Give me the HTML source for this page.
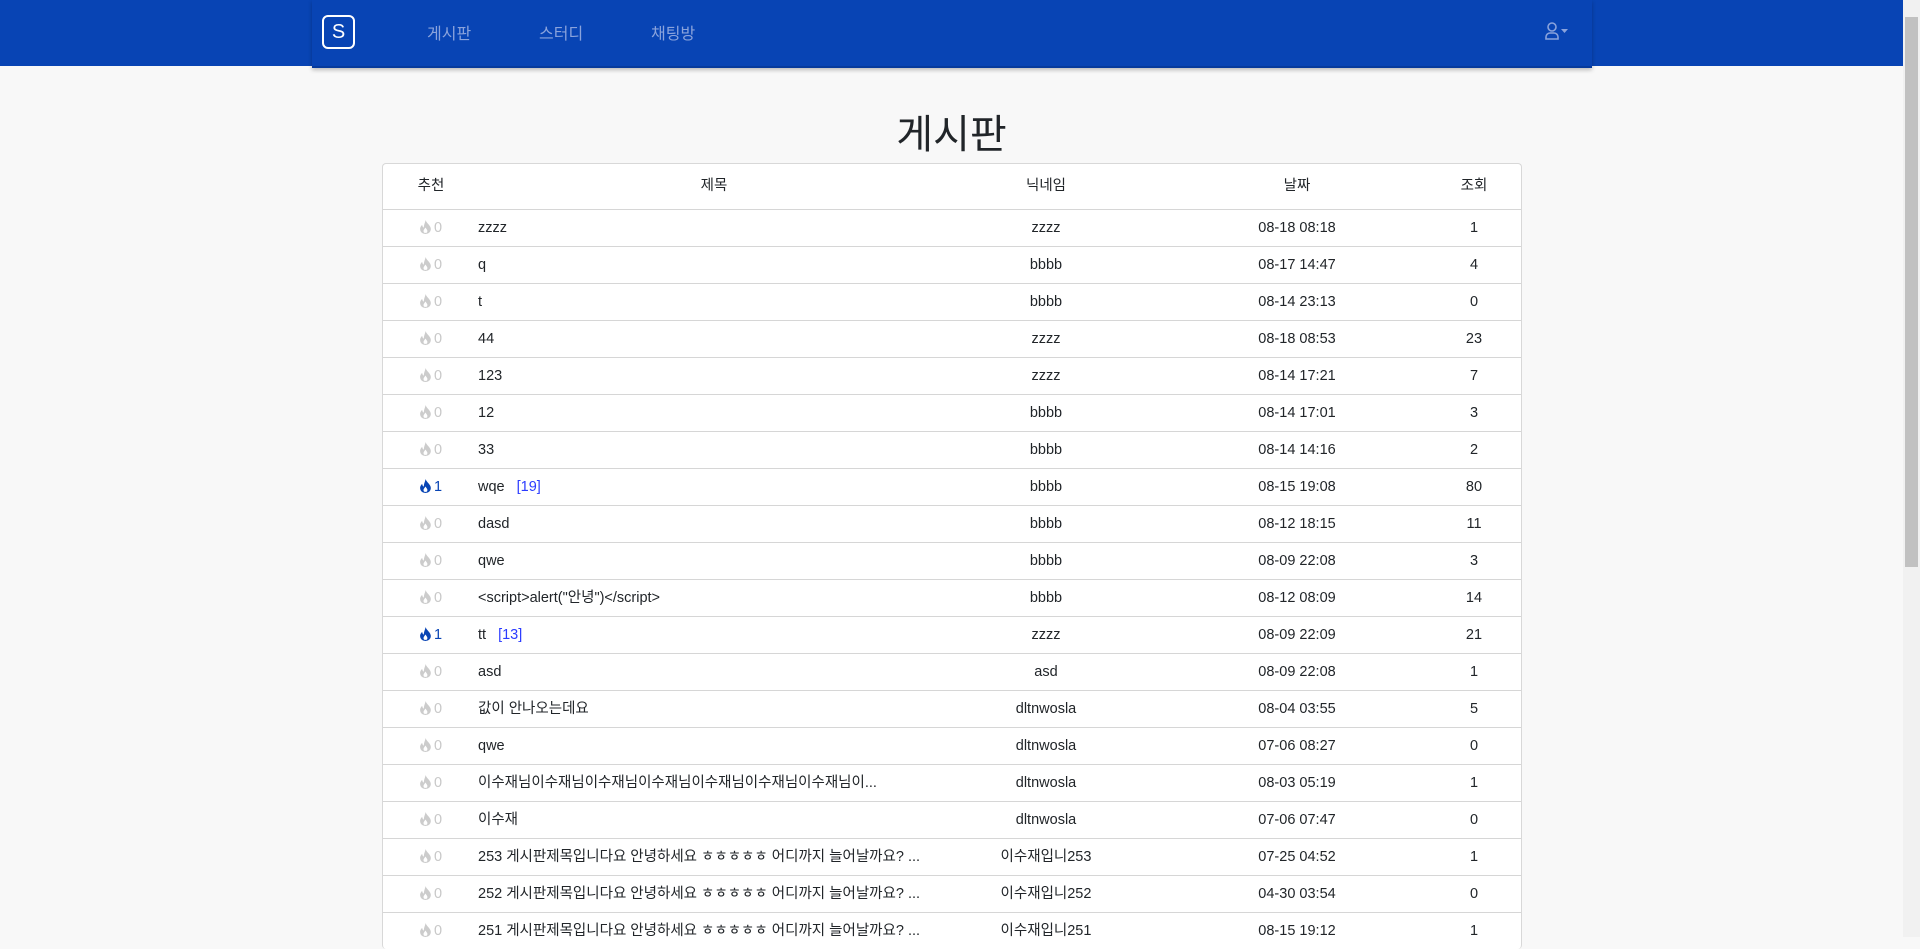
<!DOCTYPE html>
<html><head><meta charset="utf-8"><style>
*{box-sizing:border-box;margin:0;padding:0}
body{width:1920px;height:937px;overflow:hidden;background:#f8f8f8;font-family:"Liberation Sans","Noto Sans CJK KR",sans-serif;color:#212529;position:relative}
.nav{position:absolute;left:0;top:0;width:1903px;height:66px;background:#0844b4}
.navin{position:absolute;left:312px;top:0;width:1280px;height:68px;background:#0844b4;box-shadow:0 2px 4px rgba(0,0,0,.25);border-bottom:2px solid #063a9c}
.logo{position:absolute;left:10px;top:15px;width:33px;height:34px;border:2px solid #fff;border-radius:6px;color:#fff;font-size:20px;text-align:center;line-height:30px}
.ni{position:absolute;top:20px;color:#8aa3dc;font-size:16px}
.user{position:absolute;left:1233px;top:22px}
h1{position:absolute;top:109px;left:0;width:1903px;text-align:center;font-weight:400;font-size:40px;line-height:52px}
.tbl{position:absolute;left:382px;top:163px;width:1140px;background:#fff;border:1px solid #d8d8d8;border-radius:4px;border-bottom:none}
.row{position:relative;height:37px;border-top:1px solid #d6d6d6;font-size:14.5px}
.hd{height:45px;border-top:none;font-size:14.5px;font-weight:normal}
.row span{position:absolute;top:0;line-height:36px;white-space:nowrap}
.hd span{line-height:44px}
.c{transform:translateX(-50%)}
.r{left:48px;color:#c8c8c8}
.r.b{color:#0844b4}
.r svg{vertical-align:-2px;margin-right:3px}
.cm{color:#2b3bff;margin-left:12px}
.sb{position:absolute;left:1903px;top:0;width:17px;height:937px;background:#f1f1f1}
.sb div{position:absolute;left:2px;top:17px;width:13px;height:550px;background:#c1c1c1}
</style></head><body>
<div class="nav"><div class="navin">
<div class="logo">S</div>
<span class="ni" style="left:115px">게시판</span>
<span class="ni" style="left:227px">스터디</span>
<span class="ni" style="left:339px">채팅방</span>
<svg class="user" width="26" height="18" viewBox="0 0 26 18"><circle cx="7" cy="5" r="4" fill="none" stroke="#8aa3dc" stroke-width="1.6"/><path d="M1 17v-2a4 4 0 0 1 4-4h4a4 4 0 0 1 4 4v2z" fill="none" stroke="#8aa3dc" stroke-width="1.6"/><path d="M16 7h7l-3.5 4z" fill="#8aa3dc"/></svg>
</div></div>
<div class="sb"><div></div></div>
<h1>게시판</h1>
<div class="tbl" id="t">
<div class="row hd"><span class="c" style="left:48px">추천</span><span class="c" style="left:331px">제목</span><span class="c" style="left:663px">닉네임</span><span class="c" style="left:914px">날짜</span><span class="c" style="left:1091px">조회</span></div>
</div>
<script>
var d=[["0","zzzz","","zzzz","08-18 08:18","1"],["0","q","","bbbb","08-17 14:47","4"],["0","t","","bbbb","08-14 23:13","0"],["0","44","","zzzz","08-18 08:53","23"],["0","123","","zzzz","08-14 17:21","7"],["0","12","","bbbb","08-14 17:01","3"],["0","33","","bbbb","08-14 14:16","2"],["1","wqe","[19]","bbbb","08-15 19:08","80"],["0","dasd","","bbbb","08-12 18:15","11"],["0","qwe","","bbbb","08-09 22:08","3"],["0","<script>alert(\"안녕\")<\/script>","","bbbb","08-12 08:09","14"],["1","tt","[13]","zzzz","08-09 22:09","21"],["0","asd","","asd","08-09 22:08","1"],["0","값이 안나오는데요","","dltnwosla","08-04 03:55","5"],["0","qwe","","dltnwosla","07-06 08:27","0"],["0","이수재님이수재님이수재님이수재님이수재님이수재님이수재님이...","","dltnwosla","08-03 05:19","1"],["0","이수재","","dltnwosla","07-06 07:47","0"],["0","253 게시판제목입니다요 안녕하세요 ㅎㅎㅎㅎㅎ 어디까지 늘어날까요? ...","","이수재입니253","07-25 04:52","1"],["0","252 게시판제목입니다요 안녕하세요 ㅎㅎㅎㅎㅎ 어디까지 늘어날까요? ...","","이수재입니252","04-30 03:54","0"],["0","251 게시판제목입니다요 안녕하세요 ㅎㅎㅎㅎㅎ 어디까지 늘어날까요? ...","","이수재입니251","08-15 19:12","1"]];
var t=document.getElementById('t');
function esc(s){return s.replace(/&/g,'&amp;').replace(/</g,'&lt;')}
d.forEach(function(r){
var b=r[0]=="1",col=b?"#0844b4":"#cccccc";
var h='<div class="row"><span class="c r'+(b?' b':'')+'"><svg width="11" height="14" viewBox="0 0 10 13"><path d="M5 0C6 3 10 5 10 8.5A5 4.5 0 0 1 0 8.5C0 6 2 4.5 2 4.5C2 6 3 7 3.5 7C3.5 4 5 2 5 0Z" fill="'+col+'"/><path d="M5 7C6 8.5 6.8 9.3 6.8 10.2A1.8 1.8 0 0 1 3.2 10.2C3.2 9.3 4 8.5 5 7Z" fill="#fff"/></svg>'+r[0]+'</span>';
h+='<span style="left:95px">'+esc(r[1])+(r[2]?'<span class="cm" style="position:static">'+r[2]+'</span>':'')+'</span>';
h+='<span class="c" style="left:663px">'+r[3]+'</span><span class="c" style="left:914px">'+r[4]+'</span><span class="c" style="left:1091px">'+r[5]+'</span></div>';
t.insertAdjacentHTML('beforeend',h);});
</script>
</body></html>
